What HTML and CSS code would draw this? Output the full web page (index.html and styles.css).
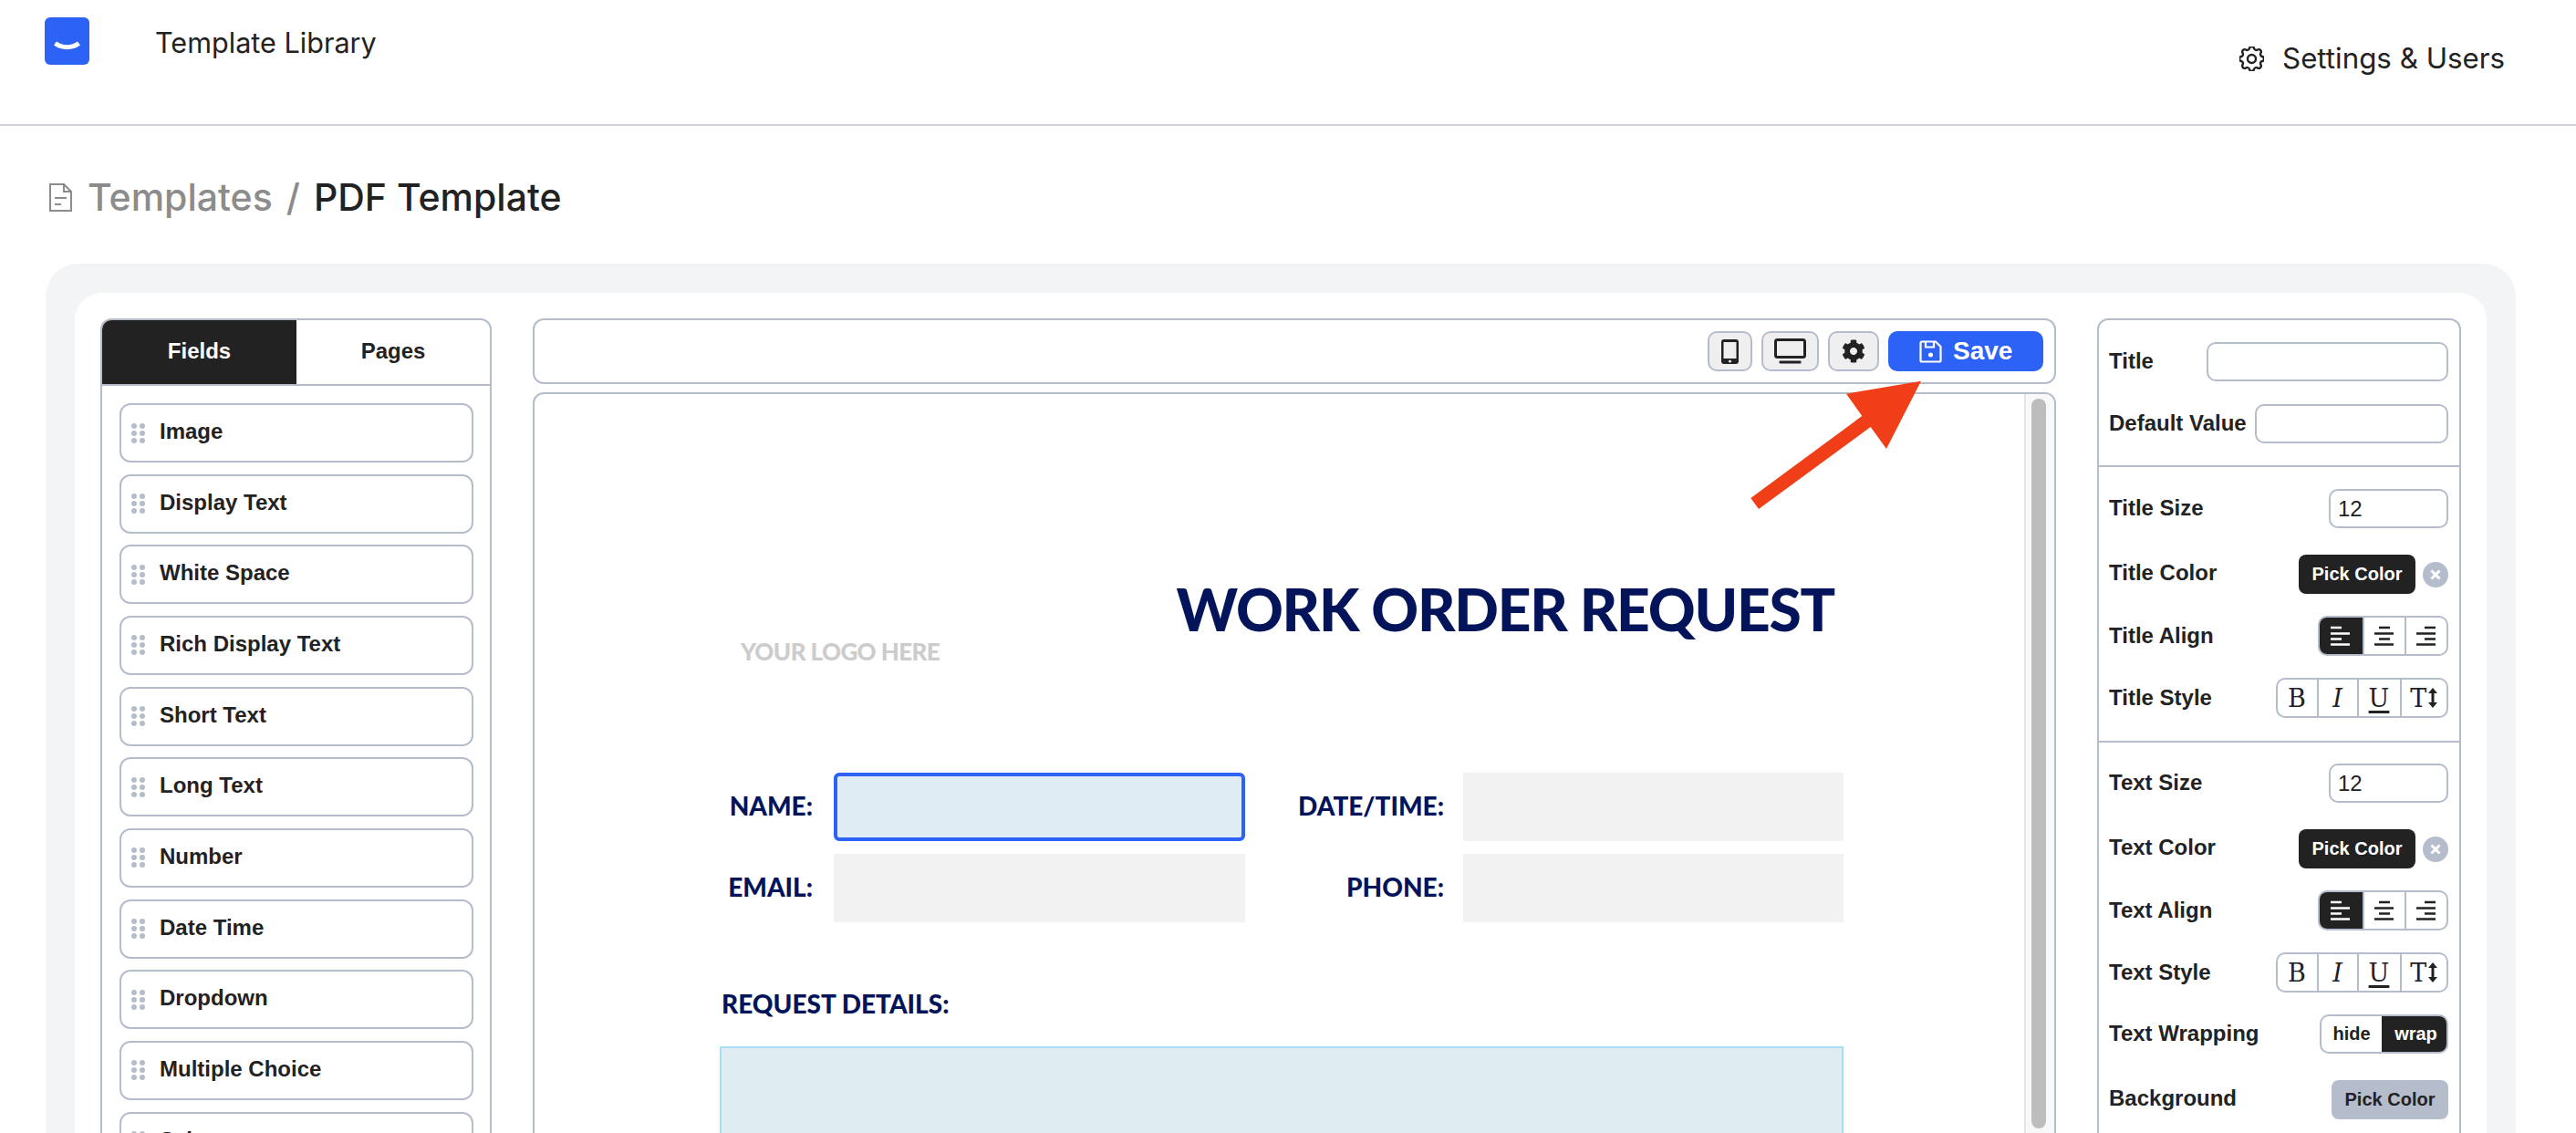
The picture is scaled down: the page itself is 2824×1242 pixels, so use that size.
FILE: index.html
```html
<!DOCTYPE html>
<html lang="en">
<head>
  <meta charset="UTF-8">
  <meta name="viewport" content="width=device-width, initial-scale=1.0">
  <title>PDF Template</title>
  <link rel="stylesheet" href="styles.css">
</head>
<body>

  <svg class="defs" width="0" height="0" aria-hidden="true">
    <symbol id="grip" viewBox="0 0 15 22">
      <circle cx="3" cy="3" r="3"/><circle cx="12" cy="3" r="3"/>
      <circle cx="3" cy="11" r="3"/><circle cx="12" cy="11" r="3"/>
      <circle cx="3" cy="19" r="3"/><circle cx="12" cy="19" r="3"/>
    </symbol>
    <symbol id="align-left" viewBox="0 0 22 22">
      <path d="M0 2h12M0 8.500h21M0 14.500h12M0 20.500h21"/>
    </symbol>
    <symbol id="align-center" viewBox="0 0 22 22">
      <path d="M5 2h12M0 8.500h21M5 14.500h12M0 20.500h21"/>
    </symbol>
    <symbol id="align-right" viewBox="0 0 22 22">
      <path d="M9 2h12M0 8.500h21M9 14.500h12M0 20.500h21"/>
    </symbol>
    <symbol id="updown" viewBox="0 0 10 22">
      <path d="M5 0l5 6H6.500v10H10l-5 6-5-6h3.500V6H0z"/>
    </symbol>
  </svg>

  <header class="topbar">
    <svg class="logo" viewBox="0 0 49 52">
      <rect width="49" height="52" rx="6" fill="#2d62f6"/>
      <path d="M11.500 28.500c7.500 5.500 18.500 5.500 26 0" fill="none" stroke="#fff" stroke-width="5"/>
    </svg>
    <a class="topbar-title">Template Library</a>
    <a class="topbar-settings">
      <svg class="gear-outline" viewBox="3 3 18 18" fill="none" stroke="#222" stroke-width="1.600">
        <path d="M10.325 4.317c.426-1.756 2.924-1.756 3.35 0a1.724 1.724 0 002.573 1.066c1.543-.94 3.31.826 2.37 2.37a1.724 1.724 0 001.065 2.572c1.756.426 1.756 2.924 0 3.35a1.724 1.724 0 00-1.066 2.573c.94 1.543-.826 3.31-2.37 2.37a1.724 1.724 0 00-2.572 1.065c-.426 1.756-2.924 1.756-3.35 0a1.724 1.724 0 00-2.573-1.066c-1.543.94-3.31-.826-2.37-2.37a1.724 1.724 0 00-1.065-2.572c-1.756-.426-1.756-2.924 0-3.35a1.724 1.724 0 001.066-2.573c-.94-1.543.826-3.31 2.37-2.37.996.608 2.296.07 2.572-1.065z"/>
        <circle cx="12" cy="12" r="3"/>
      </svg>
      Settings &amp; Users
    </a>
  </header>

  <nav class="crumbs">
    <svg class="crumbs-icon" viewBox="0 0 25 31" fill="none" stroke="#8c8c8c" stroke-width="2">
      <path d="M1 1h15l8 8v21H1z"/>
      <path d="M16 1v8h8M6 16h13M6 23h7"/>
    </svg>
    <span class="crumbs-parent">Templates</span>
    <span class="crumbs-sep">/</span>
    <span class="crumbs-current">PDF Template</span>
  </nav>

  <main class="shell">
    <div class="shell-inner">

      <aside class="fields">
        <div class="tabs">
          <div class="tab tab-active">Fields</div>
          <div class="tab">Pages</div>
        </div>
        <div class="field-list">
          <div class="field-item"><svg class="grip"><use href="#grip"/></svg>Image</div>
          <div class="field-item"><svg class="grip"><use href="#grip"/></svg>Display Text</div>
          <div class="field-item"><svg class="grip"><use href="#grip"/></svg>White Space</div>
          <div class="field-item"><svg class="grip"><use href="#grip"/></svg>Rich Display Text</div>
          <div class="field-item"><svg class="grip"><use href="#grip"/></svg>Short Text</div>
          <div class="field-item"><svg class="grip"><use href="#grip"/></svg>Long Text</div>
          <div class="field-item"><svg class="grip"><use href="#grip"/></svg>Number</div>
          <div class="field-item"><svg class="grip"><use href="#grip"/></svg>Date Time</div>
          <div class="field-item"><svg class="grip"><use href="#grip"/></svg>Dropdown</div>
          <div class="field-item"><svg class="grip"><use href="#grip"/></svg>Multiple Choice</div>
          <div class="field-item"><svg class="grip"><use href="#grip"/></svg>Select</div>
        </div>
      </aside>

      <section class="editor">
        <div class="toolbar">
          <button class="tool-btn tool-phone">
            <svg width="19" height="27" viewBox="0 0 19 27">
              <rect width="19" height="27" rx="3" fill="#222"/>
              <rect x="2.500" y="3" width="14" height="18" fill="#efefef"/>
              <circle cx="9.500" cy="24" r="1.500" fill="#efefef"/>
            </svg>
          </button>
          <button class="tool-btn tool-screen">
            <svg width="35" height="28" viewBox="0 0 35 28">
              <rect x="1.500" y="1.500" width="32" height="19" rx="2" fill="none" stroke="#222" stroke-width="3"/>
              <rect x="5.500" y="24.500" width="24" height="3" rx="1" fill="#222"/>
            </svg>
          </button>
          <button class="tool-btn tool-gear">
            <svg width="26" height="26" viewBox="0 0 512 512">
              <path fill="#222" d="M487.4 315.7l-42.6-24.6c4.3-23.2 4.3-47 0-70.2l42.6-24.6c4.900-2.800 7.100-8.600 5.500-14-11.100-35.600-30-67.800-54.700-94.600-3.800-4.100-10-5.100-14.800-2.300L380.800 110c-17.900-15.400-38.500-27.300-60.800-35.100V25.800c0-5.600-3.900-10.500-9.400-11.700-36.700-8.200-74.300-7.800-109.200 0-5.500 1.200-9.400 6.100-9.400 11.700V75c-22.200 7.900-42.800 19.800-60.800 35.100L88.700 85.500c-4.900-2.800-11-1.900-14.800 2.300-24.700 26.700-43.600 58.900-54.700 94.600-1.700 5.400.6 11.200 5.500 14L67.300 221c-4.300 23.200-4.300 47 0 70.200l-42.600 24.600c-4.900 2.800-7.100 8.600-5.500 14 11.100 35.600 30 67.800 54.700 94.600 3.800 4.100 10 5.100 14.800 2.300l42.600-24.600c17.900 15.400 38.500 27.300 60.800 35.100v49.200c0 5.600 3.900 10.500 9.400 11.700 36.700 8.200 74.300 7.800 109.200 0 5.500-1.200 9.400-6.100 9.400-11.700v-49.200c22.200-7.900 42.800-19.800 60.800-35.100l42.600 24.600c4.900 2.800 11 1.900 14.800-2.300 24.700-26.700 43.600-58.900 54.700-94.600 1.500-5.500-.7-11.300-5.600-14.100zM256 336c-44.100 0-80-35.900-80-80s35.900-80 80-80 80 35.900 80 80-35.900 80-80 80z"/>
            </svg>
          </button>
          <button class="save-btn">
            <svg width="25" height="25" viewBox="0 0 25 25" fill="none" stroke="#fff" stroke-width="2.200">
              <path d="M3 1.500h15l5.500 5.500v15a1.500 1.500 0 01-1.500 1.500H3A1.500 1.500 0 011.500 22V3A1.500 1.500 0 013 1.500z"/>
              <path d="M7 1.500v6h9v-6"/>
              <circle cx="12.500" cy="16" r="2.500" fill="#fff" stroke="none"/>
            </svg>
            Save
          </button>
        </div>

        <div class="canvas">
          <div class="doc">
            <div class="doc-head">
              <div class="doc-logo">YOUR LOGO HERE</div>
              <div class="doc-title">WORK ORDER REQUEST</div>
            </div>
            <div class="doc-form">
              <div class="doc-label doc-label-near">NAME:</div>
              <div class="doc-input doc-input-selected"></div>
              <div class="doc-label">DATE/TIME:</div>
              <div class="doc-input"></div>
              <div class="doc-label doc-label-near">EMAIL:</div>
              <div class="doc-input"></div>
              <div class="doc-label">PHONE:</div>
              <div class="doc-input"></div>
            </div>
            <div class="doc-subhead">REQUEST DETAILS:</div>
            <div class="doc-details"></div>
          </div>
          <div class="scroll-track"><div class="scroll-thumb"></div></div>
        </div>
      </section>

      <aside class="props">
        <div class="props-group">
          <div class="prop-row">
            <label>Title</label>
            <input class="input input-title">
          </div>
          <div class="prop-row">
            <label>Default Value</label>
            <input class="input input-default">
          </div>
        </div>

        <div class="props-group">
          <div class="prop-row">
            <label>Title Size</label>
            <input class="input input-num" value="12">
          </div>
          <div class="prop-row prop-row-pick">
            <label>Title Color</label>
            <div class="pick-wrap">
              <button class="pick-btn">Pick Color</button>
              <span class="clear-btn">
                <svg width="12" height="12" viewBox="0 0 12 12"><path d="M1.500 1.500l9 9M10.500 1.500l-9 9" stroke="#fff" stroke-width="3"/></svg>
              </span>
            </div>
          </div>
          <div class="prop-row">
            <label>Title Align</label>
            <div class="seg seg-align">
              <span class="seg-item seg-on"><svg class="align-icon"><use href="#align-left"/></svg></span>
              <span class="seg-item"><svg class="align-icon"><use href="#align-center"/></svg></span>
              <span class="seg-item"><svg class="align-icon"><use href="#align-right"/></svg></span>
            </div>
          </div>
          <div class="prop-row">
            <label>Title Style</label>
            <div class="seg seg-style">
              <span class="seg-item style-b">B</span>
              <span class="seg-item style-i">I</span>
              <span class="seg-item style-u">U</span>
              <span class="seg-item style-t">T<svg class="updown"><use href="#updown"/></svg></span>
            </div>
          </div>
        </div>

        <div class="props-group props-group-text">
          <div class="prop-row">
            <label>Text Size</label>
            <input class="input input-num" value="12">
          </div>
          <div class="prop-row prop-row-pick">
            <label>Text Color</label>
            <div class="pick-wrap">
              <button class="pick-btn">Pick Color</button>
              <span class="clear-btn">
                <svg width="12" height="12" viewBox="0 0 12 12"><path d="M1.500 1.500l9 9M10.500 1.500l-9 9" stroke="#fff" stroke-width="3"/></svg>
              </span>
            </div>
          </div>
          <div class="prop-row">
            <label>Text Align</label>
            <div class="seg seg-align">
              <span class="seg-item seg-on"><svg class="align-icon"><use href="#align-left"/></svg></span>
              <span class="seg-item"><svg class="align-icon"><use href="#align-center"/></svg></span>
              <span class="seg-item"><svg class="align-icon"><use href="#align-right"/></svg></span>
            </div>
          </div>
          <div class="prop-row">
            <label>Text Style</label>
            <div class="seg seg-style">
              <span class="seg-item style-b">B</span>
              <span class="seg-item style-i">I</span>
              <span class="seg-item style-u">U</span>
              <span class="seg-item style-t">T<svg class="updown"><use href="#updown"/></svg></span>
            </div>
          </div>
          <div class="prop-row">
            <label>Text Wrapping</label>
            <div class="seg seg-wrap">
              <span class="seg-item">hide</span>
              <span class="seg-item seg-on">wrap</span>
            </div>
          </div>
          <div class="prop-row prop-row-pick">
            <label>Background</label>
            <button class="pick-btn pick-btn-bg">Pick Color</button>
          </div>
        </div>
      </aside>

    </div>
  </main>

  <svg class="arrow" width="190" height="142" viewBox="1919 417 190 142">
    <path fill="#f03e18" d="M2106 417.700L2024 431.700 2041.300 456 1919.300 546 1928 558 2050.700 468 2068 492z"/>
  </svg>

</body>
</html>
```

FILE: styles.css
```css
* {
  box-sizing: border-box;
}
html, body {
  height: 100%;
  overflow: hidden;
}
body {
  margin: 0;
  background-color: #fff;
  color: #222;
  font-family: "Liberation Sans", Arial, sans-serif;
  font-size: 24px;
}
.defs {
  position: absolute;
}

/* top bar */
.topbar {
  display: flex;
  align-items: flex-start;
  height: 138px;
  padding: 19px 78px 0 49px;
  border-bottom: 2px solid #d0d0d8;
  font-family: Inter, sans-serif;
  font-size: 30.600px;
}
.logo {
  width: 49px;
  height: 52px;
}
.topbar-title {
  margin: 8px 0 0 72px;
  line-height: 40px;
}
.topbar-settings {
  display: flex;
  align-items: center;
  gap: 20px;
  margin: 25px 0 0 auto;
  font-size: 31.300px;
  line-height: 40px;
}
.gear-outline {
  width: 27px;
  height: 27px;
}

/* breadcrumb */
.crumbs {
  display: flex;
  align-items: center;
  height: 151px;
  padding: 5px 0 0 54px;
  font-family: Inter, sans-serif;
  font-size: 41px;
  font-weight: 500;
}
.crumbs-icon {
  width: 25px;
  height: 31px;
  margin-right: 17px;
}
.crumbs-parent,
.crumbs-sep {
  color: #8c8c8c;
}
.crumbs-sep {
  margin: 0 15px;
}

/* grey shell around everything */
.shell {
  margin: 0 66px 0 50px;
  padding: 32px;
  background-color: #f3f4f6;
  border-radius: 36px;
}
.shell-inner {
  display: grid;
  grid-template-columns: 429px 1670px 399px;
  gap: 45px;
  padding: 28px;
  background-color: #fff;
  border-radius: 30px;
}

/* left field list */
.fields {
  border: 2px solid #b5bccb;
  border-radius: 12px;
  font-weight: 700;
}
.tabs {
  display: flex;
  height: 72px;
  border-bottom: 2px solid #b5bccb;
}
.tab {
  flex: 1;
  display: flex;
  align-items: center;
  justify-content: center;
  padding-bottom: 3px;
}
.tab-active {
  flex: none;
  width: 213px;
  background-color: #222;
  color: #fff;
  border-top-left-radius: 10px;
}
.field-list {
  display: flex;
  flex-direction: column;
  gap: 12.670px;
  padding: 19px 18px 19px 19px;
}
.field-item {
  display: flex;
  align-items: center;
  gap: 16px;
  height: 65px;
  padding: 0 11px 3px;
  border: 2px solid #b5bccb;
  border-radius: 12px;
}
.grip {
  width: 15px;
  height: 22px;
  margin-top: 3px;
  fill: #b5bccb;
}

/* middle editor */
.toolbar {
  display: flex;
  align-items: center;
  justify-content: flex-end;
  gap: 10.500px;
  height: 72px;
  margin-bottom: 9px;
  padding: 0 12px;
  border: 2px solid #b5bccb;
  border-radius: 12px;
}
.tool-btn {
  display: flex;
  align-items: center;
  justify-content: center;
  height: 44px;
  padding: 0;
  background-color: #efefef;
  border: 2px solid #b5bccb;
  border-radius: 10px;
}
.tool-phone {
  width: 49px;
}
.tool-screen {
  width: 62.500px;
}
.tool-gear {
  width: 55.500px;
}
.save-btn {
  display: flex;
  align-items: center;
  gap: 12px;
  width: 170px;
  height: 44px;
  padding: 0 0 0 34px;
  background-color: #2d62f6;
  border: 0;
  border-radius: 10px;
  color: #fff;
  font-family: inherit;
  font-size: 28px;
  font-weight: 700;
}

.canvas {
  display: flex;
  height: 1000px;
  border: 2px solid #b5bccb;
  border-radius: 12px;
  overflow: hidden;
}
.doc {
  flex: 1;
  padding: 204px 198px 0 203px;
  font-family: Lato, sans-serif;
  font-weight: 900;
  color: #03145a;
}
.doc-head {
  display: flex;
  justify-content: space-between;
  height: 92px;
  padding: 0 10px 0 23px;
}
.doc-logo {
  margin-top: 65px;
  color: #ccc;
  font-size: 26px;
  line-height: 26px;
  letter-spacing: -0.600px;
}
.doc-title {
  font-size: 64px;
  line-height: 64px;
  letter-spacing: -1.200px;
}
.doc-form {
  display: grid;
  grid-template-columns: 125px 451px 239px 417px;
  grid-auto-rows: 75px;
  row-gap: 13.500px;
  margin-top: 119px;
}
.doc-label {
  align-self: center;
  padding: 0 21px 3px 0;
  font-size: 28px;
  text-align: right;
}
.doc-label-near {
  padding-right: 23px;
}
.doc-input {
  background-color: #f2f2f2;
}
.doc-input-selected {
  background-color: #dfecf3;
  border: 4px solid #2d62f6;
  border-radius: 6px;
}
.doc-subhead {
  margin-top: 75px;
  padding-left: 2px;
  font-size: 28px;
  line-height: 28px;
}
.doc-details {
  height: 300px;
  margin-top: 33px;
  background-color: #dfecf2;
  border: 2px solid #a8def5;
}
.scroll-track {
  flex: none;
  width: 33px;
  padding: 5px 0 0 6px;
  background-color: #f8f8f8;
  border-left: 2px solid #e4e4e4;
}
.scroll-thumb {
  width: 16px;
  height: 800px;
  background-color: #bdbdbd;
  border-radius: 8px;
}

/* right properties */
.props {
  border: 2px solid #b5bccb;
  border-radius: 12px;
}
.props-group {
  display: flex;
  flex-direction: column;
  gap: 24px;
  padding: 24px 12px 25px 11px;
  border-bottom: 2px solid #b5bccb;
}
.props-group:first-child {
  gap: 25px;
  padding-bottom: 24px;
}
.props-group-text {
  padding-top: 23px;
}
.prop-row {
  display: flex;
  align-items: center;
  justify-content: space-between;
  min-height: 43px;
}
.prop-row-pick {
  padding-top: 5px;
}
.prop-row label {
  font-weight: 700;
  padding-bottom: 1px;
}
.prop-row-pick label {
  padding-bottom: 4px;
}
.input {
  height: 43px;
  padding: 0 8px;
  background-color: #fff;
  border: 2px solid #b5bccb;
  border-radius: 10px;
  color: #222;
  font-family: inherit;
  font-size: 24px;
}
.input-title {
  width: 265px;
}
.input-default {
  width: 212.500px;
}
.input-num {
  width: 131px;
}
.pick-wrap {
  display: flex;
  align-items: center;
  gap: 8px;
}
.pick-btn {
  height: 43px;
  width: 128px;
  padding: 0;
  background-color: #222;
  border: 0;
  border-radius: 8px;
  color: #fff;
  font-family: inherit;
  font-size: 20px;
  font-weight: 700;
}
.pick-btn-bg {
  background-color: #b5bccb;
  color: #222;
}
.clear-btn {
  display: flex;
  align-items: center;
  justify-content: center;
  width: 28px;
  height: 28px;
  background-color: #b5bccb;
  border-radius: 50%;
}
.seg {
  display: flex;
  height: 44px;
  border: 2px solid #b5bccb;
  border-radius: 10px;
  overflow: hidden;
}
.seg-item {
  display: flex;
  align-items: center;
  justify-content: center;
  border-left: 2px solid #b5bccb;
}
.seg-item:first-child {
  border-left: 0;
}
.seg-on {
  margin: -2px 0;
  background-color: #222;
  border-color: #222;
  color: #fff;
}
.seg-align .seg-item {
  width: 46px;
}
.seg-align .seg-on {
  width: 49px;
  margin-left: -2px;
}
.align-icon {
  width: 22px;
  height: 22px;
  fill: none;
  stroke: currentColor;
  stroke-width: 2.600;
}
.seg-style {
  width: 189.500px;
  font-family: "DejaVu Serif", serif;
  font-size: 27px;
}
.style-b {
  width: 43px;
}
.style-i {
  width: 44px;
  font-style: italic;
}
.style-u {
  width: 47px;
  text-decoration: underline;
  text-decoration-thickness: 2.500px;
  text-underline-offset: 4px;
}
.style-t {
  flex: 1;
  gap: 2px;
}
.updown {
  width: 10px;
  height: 22px;
  fill: #222;
}
.seg-wrap {
  width: 141px;
  height: 43px;
  font-size: 20px;
  font-weight: 700;
}
.seg-wrap .seg-item {
  width: 66px;
}
.seg-wrap .seg-on {
  flex: 1;
  margin-right: -2px;
}

/* annotation arrow drawn over the screenshot */
.arrow {
  position: absolute;
  left: 1919px;
  top: 417px;
}
```
